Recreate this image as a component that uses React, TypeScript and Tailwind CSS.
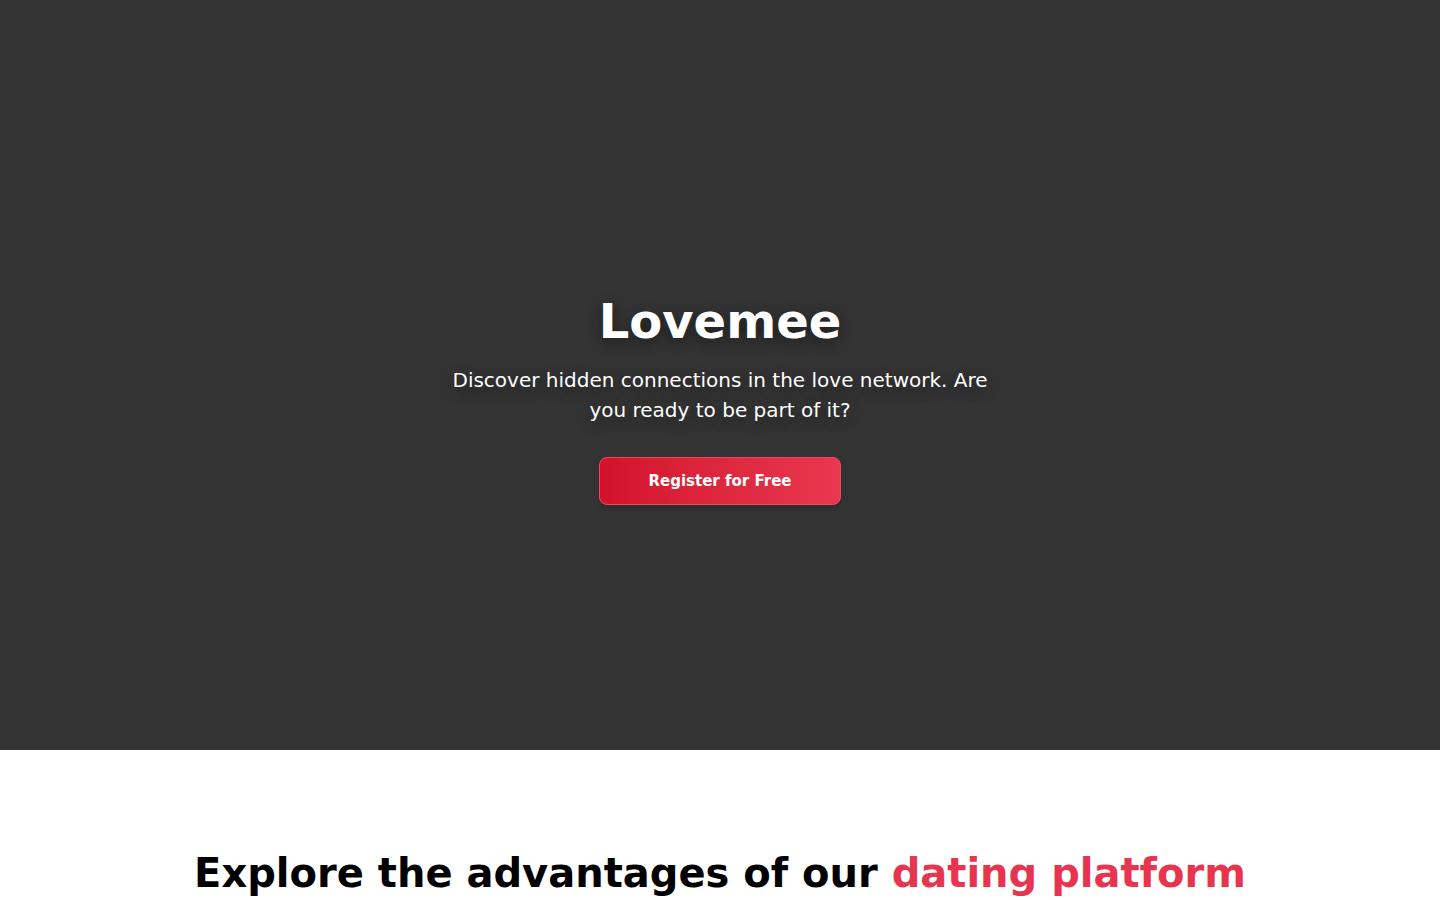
const App = () => {
  return (
    <div className="min-h-screen bg-white font-['DejaVu_Sans',sans-serif]">
      {/* Hero */}
      <section className="h-[750px] bg-[#333333] flex flex-col items-center justify-center pt-[52px] text-center">
        <h1 className="text-[48px] leading-[48px] font-bold text-white [text-shadow:0_4px_14px_rgba(0,0,0,0.45)]">
          Lovemee
        </h1>
        <p className="mt-5 max-w-[560px] text-[20px] leading-[30px] text-white [text-shadow:0_4px_14px_rgba(0,0,0,0.45)]">
          Discover hidden connections in the love network. Are you ready to be part of it?
        </p>
        <button className="mt-8 h-12 w-[242px] rounded-lg border border-[#f0485f] bg-gradient-to-r from-[#d3112b] to-[#e8374f] text-[15px] font-bold text-white shadow-md">
          Register for Free
        </button>
      </section>

      {/* Advantages */}
      <section className="pt-[99px] pb-20 text-center">
        <h2 className="text-[40px] leading-[48px] font-bold text-black">
          Explore the advantages of our <span className="text-[#e8354f]">dating platform</span>
        </h2>
      </section>
    </div>
  )
}

export default App
